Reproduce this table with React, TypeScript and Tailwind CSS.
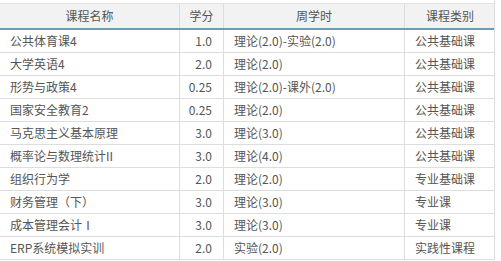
import React from "react";

const rows: [string, string, string, string][] = [
  ["公共体育课4", "1.0", "理论(2.0)-实验(2.0)", "公共基础课"],
  ["大学英语4", "2.0", "理论(2.0)", "公共基础课"],
  ["形势与政策4", "0.25", "理论(2.0)-课外(2.0)", "公共基础课"],
  ["国家安全教育2", "0.25", "理论(2.0)", "公共基础课"],
  ["马克思主义基本原理", "3.0", "理论(3.0)", "公共基础课"],
  ["概率论与数理统计II", "3.0", "理论(4.0)", "公共基础课"],
  ["组织行为学", "2.0", "理论(2.0)", "专业基础课"],
  ["财务管理（下）", "3.0", "理论(3.0)", "专业课"],
  ["成本管理会计Ⅰ", "3.0", "理论(3.0)", "专业课"],
  ["ERP系统模拟实训", "2.0", "实验(2.0)", "实践性课程"],
];

export default function App() {
  return (
    <div
      className="w-[501px] h-[261px] bg-white overflow-hidden text-[12px] text-[#555]"
      style={{ fontFamily: '"Noto Sans CJK SC", "Noto Sans", sans-serif' }}
    >
      <div className="w-[495px] pt-[3px] border-r border-[#ddd]">
        <div className="grid grid-cols-[180px_44px_181px_90px] h-[27px] bg-[#f2f2f2] border-t border-[#e2e2e2] border-b-2 border-b-[#6a9db0]">
          <div className="flex items-center justify-center border-r border-[#ddd]">课程名称</div>
          <div className="flex items-center justify-center border-r border-[#ddd]">学分</div>
          <div className="flex items-center justify-center border-r border-[#ddd]">周学时</div>
          <div className="flex items-center justify-center">课程类别</div>
        </div>
        {rows.map((r, i) => (
          <div
            key={i}
            className="grid grid-cols-[180px_44px_181px_90px] h-[23px] border-b border-[#ddd]"
          >
            <div className="flex items-center pl-[10px] border-r border-[#ddd] whitespace-nowrap">{r[0]}</div>
            <div className="flex items-center justify-end pr-[11px] border-r border-[#ddd]">{r[1]}</div>
            <div className="flex items-center pl-[10px] border-r border-[#ddd] whitespace-nowrap">{r[2]}</div>
            <div className="flex items-center pl-[10px] whitespace-nowrap">{r[3]}</div>
          </div>
        ))}
      </div>
    </div>
  );
}
